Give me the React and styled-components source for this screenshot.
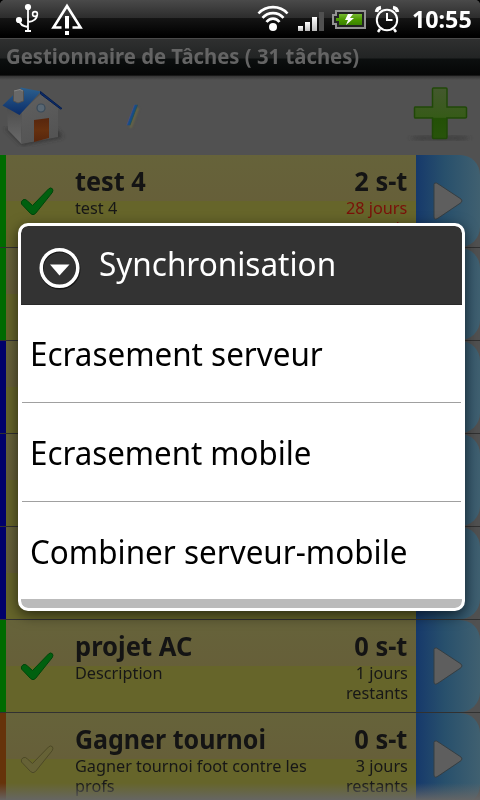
import React from 'react';
import styled, { createGlobalStyle } from 'styled-components';

const Global = createGlobalStyle`
  * { box-sizing: border-box; }
  body { margin: 0; background: #000; overflow: hidden; }
`;

const Screen = styled.div`
  position: relative;
  width: 480px;
  height: 800px;
  overflow: hidden;
  display: flex;
  flex-direction: column;
  background: #515151;
  font-family: 'Noto Sans', 'Open Sans', sans-serif;
`;

const StatusBar = styled.header`
  flex: 0 0 38px;
  min-height: 0;
  display: flex;
  align-items: flex-start;
  background: linear-gradient(#4a4a4a 0, #2c2c2c 18px, #151515 18px, #000 36px);
  border-radius: 5px 5px 0 0;
  box-shadow: 0 -6px 0 6px #000;
`;

const StatusIcons = styled.svg`
  flex: 0 0 410px;
  height: 38px;
`;

const Clock = styled.time`
  flex: 1;
  padding-left: 1.5px;
  font-size: 23px;
  font-weight: 700;
  line-height: 39px;
  color: #fff;
  white-space: nowrap;
`;

const TitleBar = styled.h1`
  flex: 0 0 38px;
  margin: 0;
  padding-left: 6px;
  border-top: 1px solid #4a4a4a;
  border-bottom: 1px solid #181818;
  background: linear-gradient(#2f3030 0, #222424 19px, #0c0f0f 20px, #050606 36px);
  color: #646464;
  font-size: 21px;
  font-weight: 700;
  line-height: 34px;
  white-space: nowrap;
`;

const Condensed = styled.span`
  display: block;
  width: max-content;
  transform: scaleX(${(p) => p.$scale});
  transform-origin: ${(p) => (p.$end ? 'right' : 'left')} center;
`;

const Toolbar = styled.nav`
  flex: 0 0 79px;
  display: flex;
  background: linear-gradient(#343434 0, #515151 4px);
`;

const HomeIcon = styled.svg`
  width: 68px;
  height: 79px;
`;

const Path = styled.div`
  flex: 1;
  padding: 21px 0 0 59px;
  font-size: 28px;
  line-height: 34px;
  color: #164d87;
  -webkit-text-stroke: 0.6px #164d87;
  text-shadow: 2px 3px 2px rgba(119, 113, 60, 0.6);
`;

const AddIcon = styled.svg`
  width: 80px;
  height: 79px;
`;

const List = styled.main`
  display: flex;
  flex-direction: column;
`;

const Row = styled.article`
  flex: 0 0 93px;
  display: flex;
  border-bottom: 1px solid #313131;
  overflow: hidden;
`;

const Stripe = styled.div`
  flex: 0 0 6px;
  background: ${(p) => p.$color};
`;

const Card = styled.div`
  flex: 0 0 410px;
  display: flex;
  background: linear-gradient(#66633a 0, #665f39 46px, #66652a 46px, #66652a 100%);
`;

const Check = styled.svg`
  flex: 0 0 69px;
  height: 92px;
`;

const Details = styled.div`
  flex: 1;
  min-width: 0;
  padding-top: 10px;
`;

const Remaining = styled.div`
  flex: 0 0 88px;
  padding: 10px 8.5px 0 0;
  display: flex;
  flex-direction: column;
  align-items: flex-end;
`;

const Name = styled.h2`
  margin: 0;
  height: 33px;
  font-size: 26.5px;
  font-weight: 700;
  line-height: 33px;
  color: #141414;
  white-space: nowrap;
`;

const Note = styled.p`
  margin: 0;
  height: 20px;
  font-size: 16.5px;
  line-height: 20px;
  color: ${(p) => (p.$late ? '#7a1009' : '#171717')};
  white-space: nowrap;
`;

const OpenButton = styled.div`
  flex: 0 0 64px;
  background: linear-gradient(90deg, #16396b, #28506c 45%, #406070);
  border-radius: 0 20px 20px 0;
`;

const Arrow = styled.svg`
  display: block;
  width: 64px;
  height: 92px;
`;

const BottomFade = styled.div`
  position: absolute;
  left: 0;
  right: 0;
  bottom: 0;
  height: 17px;
  background: linear-gradient(rgba(102, 102, 102, 0), rgba(102, 102, 102, 0.95));
`;

const Dialog = styled.section`
  position: absolute;
  left: 18px;
  top: 223px;
  width: 447px;
  height: 388px;
  display: flex;
  flex-direction: column;
  border: 3px solid #fff;
  border-radius: 10px;
  background: #fff;
  overflow: hidden;
  box-shadow: 0 4px 14px rgba(0, 0, 0, 0.6);
`;

const DialogHeader = styled.header`
  flex: 0 0 79px;
  display: flex;
  background: #333;
  border-radius: 7px 7px 0 0;
  border-bottom: 1px solid #292929;
`;

const MenuIcon = styled.svg`
  flex: 0 0 78px;
  height: 78px;
`;

const DialogTitle = styled.h2`
  margin: 0;
  font-size: 33px;
  font-weight: 400;
  line-height: 76px;
  color: #fff;
  white-space: nowrap;
`;

const Option = styled.div`
  flex: 0 0 ${(p) => p.$height}px;
  min-height: 0;
  margin: 0 1px;
  padding-left: 8px;
  border-bottom: ${(p) => (p.$last ? 0 : 1)}px solid #a0a0a0;
  font-size: 33px;
  line-height: ${(p) => p.$line}px;
  color: #000;
  white-space: nowrap;
`;

const DialogFoot = styled.div`
  flex: 0 0 9px;
  background: #bbb;
  border-radius: 0 0 7px 7px;
`;

const tasks = [
  { color: '#006b00', done: true, name: 'test 4', note: ['test 4'], load: '2 s-t', left: ['28 jours', 'retards'], late: true },
  { color: '#006b00' },
  { color: '#00006b' },
  { color: '#00006b' },
  { color: '#00006b' },
  { color: '#006b00', done: true, name: 'projet AC', nameScale: 0.965, note: ['Description'], load: '0 s-t', left: ['1 jours', 'restants'] },
  { color: '#66330a', name: 'Gagner tournoi', nameScale: 0.943, note: ['Gagner tournoi foot contre les', 'profs'], load: '0 s-t', left: ['3 jours', 'restants'] },
];

function Task({ color, done, name, nameScale = 0.955, note = [], load, left = [], late }) {
  return (
    <Row>
      <Stripe $color={color} />
      <Card>
        {name && (
          <>
            <Check viewBox="0 0 69 92">
              <path d="M15.5 49Q14.500 46.500 17 44.800Q19.500 43.500 21.500 46L26.500 50.500L42.500 34Q44.500 32 46.300 33.700Q47.600 35 46.300 37.500L29.500 58.500Q27 61 24.500 58.500Z"
                fill={done ? '#00600f' : '#666236'} stroke={done ? '#00450a' : '#4d4926'} strokeWidth="1" strokeLinejoin="round" />
            </Check>
            <Details>
              <Name><Condensed $scale={nameScale}>{name}</Condensed></Name>
              {note.map((line) => <Note key={line}><Condensed $scale={0.985}>{line}</Condensed></Note>)}
            </Details>
            <Remaining>
              <Name><Condensed $end $scale={0.96}>{load}</Condensed></Name>
              {left.map((line) => <Note key={line} $late={late}><Condensed $end $scale={0.985}>{line}</Condensed></Note>)}
            </Remaining>
          </>
        )}
      </Card>
      <OpenButton>
        <Arrow viewBox="0 0 64 92">
          <path d="M18 29.500Q18 27.500 20.500 28L23 29.500L45 44Q47 46 45 47.700L23 62.500Q18 66 18 62Z" fill="#5e5e5e" stroke="#353e43" />
        </Arrow>
      </OpenButton>
    </Row>
  );
}

export default function App() {
  return (
    <Screen>
      <Global />
      <StatusBar>
        <StatusIcons viewBox="0 0 410 38">
          <defs>
            <linearGradient id="bars" x2="0" y2="1"><stop stopColor="#fff" /><stop offset="1" stopColor="#bbb" /></linearGradient>
            <linearGradient id="charge" x2="0" y2="1"><stop stopColor="#77b832" /><stop offset=".5" stopColor="#4b9900" /><stop offset="1" stopColor="#398100" /></linearGradient>
          </defs>
          <g fill="none" stroke="#fff" strokeWidth="2">
            <path d="M28 7V30M19 20Q20 26 28 27M37 15Q37 21 28 22" strokeWidth="1.800" />
            <circle cx="35" cy="14" r="2.400" strokeWidth="1.600" />
            <path d="M61.500 27.500H53.500L67 6L80.500 27.500H72.500" strokeWidth="2.600" />
          </g>
          <g fill="#fff">
            <circle cx="28" cy="7" r="3.100" />
            <circle cx="19" cy="20" r="3.100" />
            <rect x="25" y="30" width="6" height="2" />
            <rect x="65" y="16" width="4" height="12.500" />
            <rect x="65" y="31" width="4" height="4" />
            <circle cx="273" cy="27" r="4" />
          </g>
          <g fill="none" stroke="#fff" strokeWidth="2.600">
            <path d="M258.500 13.500C266 5 280 5 287.500 13.500" />
            <path d="M262.500 17.800C268 11.500 278 11.500 283.500 17.800" />
            <path d="M266.500 22C270 17.500 276 17.500 279.500 22" />
          </g>
          <g fill="url(#bars)">
            <rect x="298" y="26" width="5" height="5" />
            <rect x="305" y="22" width="5" height="9" />
            <rect x="312" y="17" width="5" height="14" />
          </g>
          <rect x="319" y="12" width="5" height="19" fill="#505050" />
          <path d="M336 11H365V28H336V24H333V15H336Z" fill="#222" stroke="#929292" strokeWidth="2" />
          <path d="M339 14H362V25H339V21H336V18H339Z" fill="url(#charge)" />
          <path d="M348 14H353L350 18H354L346 25L348 20H345Z" fill="#fff" />
          <g fill="none" stroke="#fff" strokeWidth="2">
            <circle cx="387" cy="20" r="10.200" />
            <path d="M387 13V20H392.500" />
            <path d="M380 29L378 32M394 29L396 32" strokeWidth="2.500" />
            <path d="M376.500 12Q377 8 381 7.500M393 7.500Q397 8 397.500 12" strokeWidth="3.500" />
          </g>
        </StatusIcons>
        <Clock><Condensed $scale={1.01}>10:55</Condensed></Clock>
      </StatusBar>
      <TitleBar><Condensed $scale={0.966}>Gestionnaire de Tâches ( 31 tâches)</Condensed></TitleBar>
      <Toolbar>
        <HomeIcon viewBox="0 0 68 79">
          <defs>
            <linearGradient id="roof" x2="0" y2="1"><stop stopColor="#2c608e" /><stop offset="1" stopColor="#0b2c68" /></linearGradient>
            <linearGradient id="wall" x2=".3" y2="1"><stop stopColor="#606060" /><stop offset="1" stopColor="#545454" /></linearGradient>
            <linearGradient id="side" x2="0" y2="1"><stop stopColor="#4c4c4c" /><stop offset="1" stopColor="#6a6a6a" /></linearGradient>
            <linearGradient id="door" x2="0" y2="1"><stop stopColor="#57260d" /><stop offset=".5" stopColor="#66300e" /><stop offset="1" stopColor="#57260d" /></linearGradient>
            <filter id="soft"><feGaussianBlur stdDeviation="2" /></filter>
          </defs>
          <path d="M5 52L22 69L63 61L55 52Z" fill="#303030" filter="url(#soft)" />
          <path d="M21.500 36L41 18L58 32V61L21.500 68Z" fill="url(#wall)" />
          <path d="M21.500 37V68L8 54L7 31Z" fill="url(#side)" />
          <path d="M2.500 29.500L21 11.500L41 15.500L19.500 39Z" fill="url(#roof)" />
          <path d="M40.500 15.500L62 32.500L60.500 33L40.500 18Z" fill="#0a2a68" stroke="#071f50" />
          <path d="M13.500 15L20 13L23.500 15V25L18 27L13.500 25Z" fill="#686868" stroke="#505050" />
          <path d="M14 15L20 13.500L23 15" stroke="#888" fill="none" />
          <circle cx="41" cy="32" r="4" fill="#596773" stroke="#394a59" strokeWidth="1.200" />
          <path d="M34 44L49 42V62L34 66Z" fill="url(#door)" />
        </HomeIcon>
        <Path>/</Path>
        <AddIcon viewBox="0 0 80 79">
          <defs><linearGradient id="plus" x2="0" y2="1"><stop stopColor="#44582e" /><stop offset=".58" stopColor="#365b18" /><stop offset=".6" stopColor="#235006" /><stop offset="1" stopColor="#28540b" /></linearGradient></defs>
          <ellipse cx="40" cy="62" rx="30" ry="2" fill="#393939" filter="url(#soft)" />
          <path d="M33.500 12H46Q47 12 47 13V31H65Q66.500 31 66.500 32V41Q66.500 42 65 42H47V61Q47 62.500 46 62.500H33.500Q32.500 62.500 32.500 61V42H15Q14.500 42 14.500 41V32Q14.500 31 15 31H32.500V13Q32.500 12 33.500 12Z" fill="url(#plus)" stroke="#204808" strokeWidth="1.500" />
        </AddIcon>
      </Toolbar>
      <List>{tasks.map((task, i) => <Task key={i} {...task} />)}</List>
      <BottomFade />
      <Dialog>
        <DialogHeader>
          <MenuIcon viewBox="0 0 78 78">
            <circle cx="39" cy="43" r="18.500" fill="none" stroke="#161616" strokeWidth="4" />
            <circle cx="38.500" cy="42" r="18.300" fill="none" stroke="#fff" strokeWidth="3.500" />
            <path d="M29 38.500H48.500L38.500 49.500Z" fill="#fff" />
          </MenuIcon>
          <DialogTitle><Condensed $scale={0.954}>Synchronisation</Condensed></DialogTitle>
        </DialogHeader>
        <Option $height={98} $line={98}><Condensed $scale={0.951}>Ecrasement serveur</Condensed></Option>
        <Option $height={99} $line={100}><Condensed $scale={0.947}>Ecrasement mobile</Condensed></Option>
        <Option $height={97} $line={100} $last><Condensed $scale={0.952}>Combiner serveur-mobile</Condensed></Option>
        <DialogFoot />
      </Dialog>
    </Screen>
  );
}
